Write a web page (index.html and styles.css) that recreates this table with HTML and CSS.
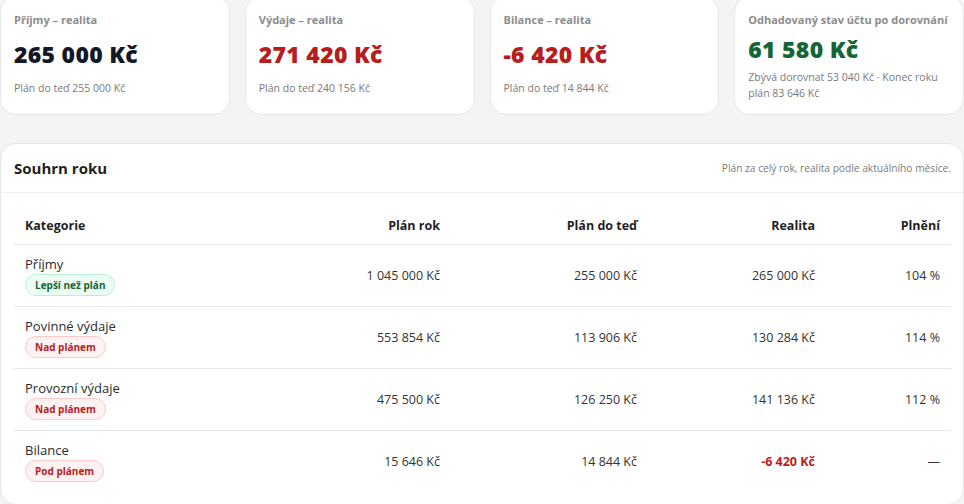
FILE: index.html
```html
<!DOCTYPE html>
<html lang="cs">
<head>
<meta charset="utf-8">
<title>Souhrn roku</title>
<link rel="stylesheet" href="styles.css">
</head>
<body>
<div class="page">
  <div class="cards">
    <div class="card">
      <div class="card-label">Příjmy – realita</div>
      <div class="card-value dark">265 000 Kč</div>
      <div class="card-sub">Plán do teď 255 000 Kč</div>
    </div>
    <div class="card">
      <div class="card-label">Výdaje – realita</div>
      <div class="card-value red">271 420 Kč</div>
      <div class="card-sub">Plán do teď 240 156 Kč</div>
    </div>
    <div class="card">
      <div class="card-label">Bilance – realita</div>
      <div class="card-value red">-6 420 Kč</div>
      <div class="card-sub">Plán do teď 14 844 Kč</div>
    </div>
    <div class="card card-tight">
      <div class="card-label">Odhadovaný stav účtu po dorovnání</div>
      <div class="card-value green">61 580 Kč</div>
      <div class="card-sub">Zbývá dorovnat 53 040 Kč · Konec roku plán 83 646 Kč</div>
    </div>
  </div>

  <section class="panel">
    <div class="panel-head">
      <h2 class="panel-title">Souhrn roku</h2>
      <div class="panel-note">Plán za celý rok, realita podle aktuálního měsíce.</div>
    </div>
    <div class="table-wrap">
      <table class="summary">
        <colgroup>
          <col class="c1"><col class="c2"><col class="c3"><col class="c4"><col class="c5">
        </colgroup>
        <thead>
          <tr>
            <th class="left">Kategorie</th>
            <th>Plán rok</th>
            <th>Plán do teď</th>
            <th>Realita</th>
            <th>Plnění</th>
          </tr>
        </thead>
        <tbody>
          <tr>
            <td class="left"><div class="cat">Příjmy</div><span class="badge good">Lepší než plán</span></td>
            <td>1 045 000 Kč</td>
            <td>255 000 Kč</td>
            <td>265 000 Kč</td>
            <td>104 %</td>
          </tr>
          <tr>
            <td class="left"><div class="cat">Povinné výdaje</div><span class="badge bad">Nad plánem</span></td>
            <td>553 854 Kč</td>
            <td>113 906 Kč</td>
            <td>130 284 Kč</td>
            <td>114 %</td>
          </tr>
          <tr>
            <td class="left"><div class="cat">Provozní výdaje</div><span class="badge bad">Nad plánem</span></td>
            <td>475 500 Kč</td>
            <td>126 250 Kč</td>
            <td>141 136 Kč</td>
            <td>112 %</td>
          </tr>
          <tr>
            <td class="left"><div class="cat">Bilance</div><span class="badge bad">Pod plánem</span></td>
            <td>15 646 Kč</td>
            <td>14 844 Kč</td>
            <td class="neg">-6 420 Kč</td>
            <td>—</td>
          </tr>
        </tbody>
      </table>
    </div>
  </section>
</div>
</body>
</html>
```

FILE: styles.css
```css
* { box-sizing: border-box; }
html, body {
  margin: 0;
  padding: 0;
  background: #f3f4f6;
  font-family: "Open Sans", "Noto Sans", sans-serif;
  color: #222;
}
.page {
  width: 964px;
  margin-top: -4px;
}
.cards {
  display: grid;
  grid-template-columns: repeat(4, 1fr);
  gap: 15px;
}
.card {
  background: #fff;
  border: 1px solid #e5e7eb;
  border-radius: 16px;
  padding: 15px 13px 0;
  height: 119px;
  display: flex;
  flex-direction: column;
}
.card-label {
  font-size: 11px;
  font-weight: 700;
  color: #8c8c8c;
  line-height: 16px;
}
.card-value {
  margin-top: 12px;
  font-size: 23px;
  font-weight: 800;
  line-height: 28px;
  letter-spacing: 0.3px;
}
.card-sub {
  margin-top: 12px;
  font-size: 10.5px;
  color: #7a7a7a;
  line-height: 16px;
}
.card-tight .card-value { margin-top: 7px; }
.card-tight .card-sub { margin-top: 6px; }
.dark { color: #111827; }
.red { color: #b91c1c; }
.green { color: #166534; }
.panel {
  margin-top: 28px;
  background: #fff;
  border: 1px solid #e5e7eb;
  border-radius: 16px;
  padding-bottom: 12px;
}
.panel-head {
  display: flex;
  align-items: center;
  justify-content: space-between;
  height: 49px;
  padding: 0 12px 0 13px;
  border-bottom: 1px solid #eceef1;
}
.panel-title {
  margin: 0;
  font-size: 15px;
  font-weight: 700;
  color: #1f1f1f;
}
.panel-note {
  font-size: 10.2px;
  color: #7a7a7a;
}
.table-wrap {
  padding: 14px 12px 0 13px;
}
.summary {
  width: 937px;
  border-collapse: collapse;
  table-layout: fixed;
  font-size: 12.5px;
}
.c1 { width: 237px; }
.c2 { width: 200px; }
.c3 { width: 197px; }
.c4 { width: 178px; }
.c5 { width: 125px; }
.summary th {
  text-align: right;
  font-weight: 700;
  color: #1f1f1f;
  padding: 10px 11px;
  line-height: 17px;
  border-bottom: 1px solid #e5e7eb;
}
.summary td {
  text-align: right;
  padding: 10px 11px;
  color: #333;
  border-bottom: 1px solid #e5e7eb;
  vertical-align: middle;
}
.summary tbody tr:last-child td { border-bottom: none; }
.summary .left { text-align: left; }
.cat {
  line-height: 19px;
  font-size: 13px;
  color: #2a2a2a;
}
.badge {
  display: inline-flex;
  align-items: center;
  height: 22px;
  padding: 0 9px;
  border-radius: 11px;
  font-size: 10px;
  font-weight: 700;
  border: 1px solid;
}
.badge.good {
  background: #ecfdf3;
  border-color: #bbf0cf;
  color: #166534;
}
.badge.bad {
  background: #fef2f2;
  border-color: #fbcaca;
  color: #b91c1c;
}
.summary td.neg {
  color: #b91c1c;
  font-weight: 700;
}
```
